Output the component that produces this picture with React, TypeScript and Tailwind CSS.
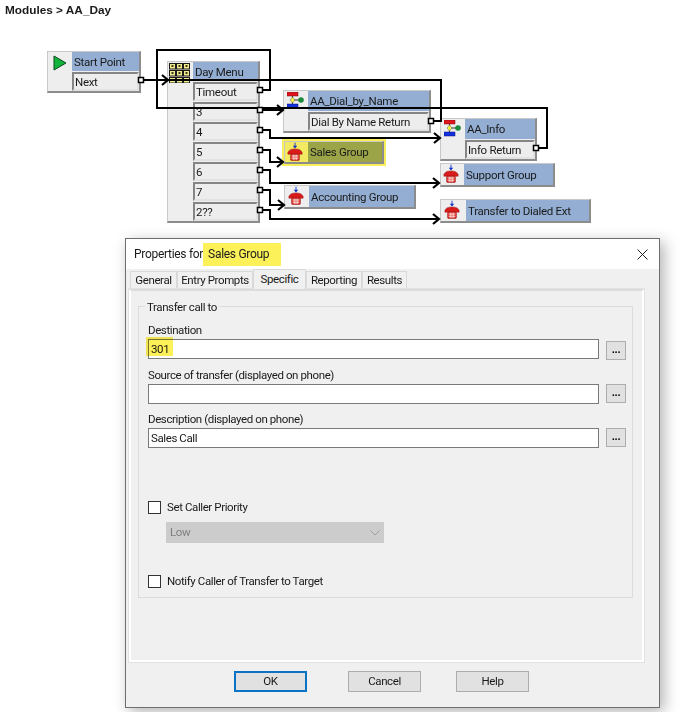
import { ReactNode } from "react";

const nodeFont = "font-['Roboto',sans-serif] text-[11.5px] tracking-[-0.3px] leading-none text-[#1a1a1a]";

function PlayIcon() {
  return (
    <svg width="14" height="16" viewBox="0 0 14 16" className="mt-[3px] ml-[5px]">
      <path d="M1 1 L13 8 L1 15 Z" fill="#12b33a" stroke="#0a4a1c" strokeWidth="1" />
    </svg>
  );
}

function MenuIcon() {
  const cells = [0, 1, 2, 3, 4, 5, 6, 7, 8];
  return (
    <svg width="21" height="20" viewBox="0 0 21 20" className="mt-px ml-px">
      {cells.map((c) => (
        <g key={c}>
          <rect x={0.5 + (c % 3) * 7} y={0.5 + Math.floor(c / 3) * 7} width="6" height="5.5" fill="#f2ec8c" stroke="#1a1a1a" />
          <rect x={2.5 + (c % 3) * 7} y={2 + Math.floor(c / 3) * 7} width="2" height="2" fill="#3a3a1a" />
        </g>
      ))}
    </svg>
  );
}

function ModuleIcon() {
  return (
    <svg width="20" height="18" viewBox="0 0 20 18" className="mt-px ml-[3px]">
      <rect x="0" y="0" width="11" height="4" fill="#e0141c" stroke="#7a1014" strokeWidth="0.5" />
      <rect x="0" y="12" width="11" height="4" fill="#1030e0" stroke="#101070" strokeWidth="0.5" />
      <path d="M5.5 4 V12 M5.5 8 H13" stroke="#333" strokeWidth="1" />
      <path d="M5.5 5 L8 8 L5.5 11 L3 8 Z" fill="#f4f03c" stroke="#555" strokeWidth="0.5" />
      <circle cx="14" cy="8" r="2.8" fill="#1c8a3c" />
    </svg>
  );
}

function PhoneIcon() {
  return (
    <svg width="16" height="20" viewBox="0 0 18 21">
      <path d="M9 0 V5" stroke="#1030c8" strokeWidth="1" />
      <path d="M6.5 3.5 L9 6.5 L11.5 3.5 Z" fill="#1030c8" />
      <path d="M1 11 C2 8 5 7 9 7 C13 7 16 8 17 11 L17 13 L1 13 Z" fill="#d81c1c" stroke="#8a1010" strokeWidth="0.5" />
      <rect x="4" y="13" width="10" height="7" rx="1" fill="#d81c1c" stroke="#8a1010" strokeWidth="0.5" />
      <path d="M5 15 H13 M5 17.5 H13 M7 13.5 V19.5 M9 13.5 V19.5 M11 13.5 V19.5" stroke="#fff2e8" strokeWidth="0.9" />
    </svg>
  );
}

function Cell({ label }: { label: string }) {
  return (
    <div className="flex h-[19px] items-center border-2 border-t-[#858585] border-l-[#858585] border-r-[#e2e2e2] border-b-[#e2e2e2] bg-[#ededed] pt-[2px] pl-px whitespace-nowrap">
      {label}
    </div>
  );
}

function Node({
  pos,
  icon,
  title,
  cells = [],
  iconCol,
  highlight = false,
}: {
  pos: string;
  icon: ReactNode;
  title: string;
  cells?: string[];
  iconCol: string;
  highlight?: boolean;
}) {
  return (
    <div
      className={`absolute flex border-t border-l border-t-[#c8c8c8] border-l-[#c8c8c8] border-r-2 border-b-2 border-r-[#8c8c8c] border-b-[#8c8c8c] ${nodeFont} ${pos} ${
        highlight ? "bg-[#f3ea63] outline-2 outline-[#f7ee5a]" : "bg-[#eeeeee]"
      }`}
    >
      <div className={`shrink-0 ${iconCol}`}>{icon}</div>
      <div className="flex min-w-0 flex-1 flex-col gap-[1px]">
        <div className={`flex flex-1 items-center pt-[2px] pl-[2px] whitespace-nowrap ${highlight ? "bg-[#9ba548]" : "bg-[#93aed2]"}`}>{title}</div>
        {cells.map((c) => (
          <Cell key={c} label={c} />
        ))}
      </div>
    </div>
  );
}

function Chevron({ x, y }: { x: number; y: number }) {
  return <path d={`M${x - 6} ${y - 5} L${x} ${y} L${x - 6} ${y + 5}`} fill="none" stroke="#000" strokeWidth="2.2" />;
}

const wires = [
  "M141 80 H441 V121 H431",
  "M260 90 H270 V50 H157 V108 H547 V148 H536",
  "M260 110 H283",
  "M260 130 H270 V138 H440",
  "M260 150 H270 V162 H283",
  "M260 170 H270 V183 H439",
  "M260 190 H270 V205 H284",
  "M260 210 H270 V219 H439",
];

const ports = [
  [141, 80], [260, 90], [260, 110], [260, 130], [260, 150], [260, 170], [260, 190], [260, 210], [431, 121], [536, 148],
];

const arrows = [
  [168, 80], [283, 110], [440, 138], [283, 162], [439, 183], [284, 205], [439, 219],
];

function Wires() {
  return (
    <svg width="683" height="235" className="absolute top-0 left-0">
      {wires.map((d) => (
        <path key={d} d={d} fill="none" stroke="#000" strokeWidth="2" />
      ))}
      {arrows.map(([x, y]) => (
        <Chevron key={`${x}-${y}`} x={x} y={y} />
      ))}
      {ports.map(([x, y]) => (
        <rect key={`${x}-${y}`} x={x - 2.5} y={y - 2.5} width="5" height="5" fill="#fff" stroke="#000" strokeWidth="1.5" />
      ))}
    </svg>
  );
}

function Field({ label, value, mark }: { label: string; value: string; mark?: boolean }) {
  return (
    <div className="flex flex-col">
      <div className="h-[16px] leading-[15px]">{label}</div>
      <div className="relative flex gap-[7px]">
        <div className="flex h-[20px] w-[451px] items-center border border-[#7a7a7a] bg-white pt-[2px] pl-[2px]">{value}</div>
        <button className={`flex h-[19px] w-[20px] items-center justify-center border border-[#adadad] bg-[#e1e1e1] pb-[2px] text-[11px] leading-none font-bold text-black ${mark ? "mt-[2px]" : ""}`}>
          ...
        </button>
        {mark && <div className="absolute top-[-2px] left-[-2px] h-[19px] w-[27px] bg-[#fdf15a] mix-blend-multiply" />}
      </div>
    </div>
  );
}

function Check({ label }: { label: string }) {
  return (
    <div className="flex h-[15px] items-center gap-[6px]">
      <div className="h-[13px] w-[13px] border border-[#333333] bg-white" />
      <span>{label}</span>
    </div>
  );
}

function Tab({ label, width, active = false }: { label: string; width: string; active?: boolean }) {
  return (
    <div
      className={`flex items-center justify-center border border-b-0 border-[#d9d9d9] bg-[#f0f0f0] whitespace-nowrap ${width} ${
        active ? "z-10 mb-[-1px] h-[20px]" : "mt-[2px] h-[18px]"
      }`}
    >
      {label}
    </div>
  );
}

function DlgButton({ label, primary = false }: { label: string; primary?: boolean }) {
  return (
    <button
      className={`h-[21px] w-[73px] bg-[#e1e1e1] ${primary ? "border-2 border-[#0b73c4]" : "border border-[#adadad]"}`}
    >
      {label}
    </button>
  );
}

function Dialog() {
  return (
    <div className="absolute top-[238px] left-[125px] flex h-[470px] w-[535px] flex-col border border-[#6e6e6e] bg-[#f0f0f0] font-['Roboto',sans-serif] text-[11.5px] tracking-[-0.4px] text-[#1a1a1a] shadow-[4px_4px_14px_rgba(0,0,0,0.3)]">
      <div className="flex h-[30px] shrink-0 items-center justify-between bg-white pr-[11px] pl-[8px] text-[12px] tracking-[-0.3px]">
        <div className="flex items-center">
          <span>Properties for</span>
          <span className="flex h-[23px] items-center bg-[#fdf15a] pr-[12px] pl-[5px]">Sales Group</span>
        </div>
        <svg width="11" height="11" viewBox="0 0 11 11">
          <path d="M0.5 0.5 L10.5 10.5 M10.5 0.5 L0.5 10.5" stroke="#222" strokeWidth="1" />
        </svg>
      </div>

      <div className="flex h-[20px] shrink-0 pl-[4px]">
        <Tab label="General" width="w-[47px]" />
        <Tab label="Entry Prompts" width="w-[76px]" />
        <Tab label="Specific" width="w-[53px]" active />
        <Tab label="Reporting" width="w-[56px]" />
        <Tab label="Results" width="w-[45px]" />
      </div>

      <div className="mr-[15px] ml-[3px] h-[373px] shrink-0 border-2 border-white border-t-[#dcdcdc] pt-[15px] pl-[7px] outline outline-[#e2e2e2]">
        <div className="relative h-[292px] w-[495px] border border-[#dcdcdc] pt-[16px] pl-[9px]">
          <span className="absolute top-[-8px] left-[6px] bg-[#f0f0f0] px-[2px] leading-[16px]">Transfer call to</span>
          <div className="flex flex-col gap-[8px]">
            <Field label="Destination" value="301" mark />
            <Field label="Source of transfer (displayed on phone)" value="" />
            <Field label="Description (displayed on phone)" value="Sales Call" />
          </div>
          <div className="mt-[52px]">
            <Check label="Set Caller Priority" />
          </div>
          <div className="mt-[7px] ml-[18px] flex h-[21px] w-[218px] items-center justify-between bg-[#cccccc] px-[4px] text-[#7f7f7f]">
            <span>Low</span>
            <svg width="10" height="6" viewBox="0 0 10 6">
              <path d="M0.5 0.5 L5 5 L9.5 0.5" fill="none" stroke="#a0a0a0" strokeWidth="1" />
            </svg>
          </div>
          <div className="mt-[31px]">
            <Check label="Notify Caller of Transfer to Target" />
          </div>
        </div>
      </div>

      <div className="flex pt-[9px] pl-[108px]">
        <DlgButton label="OK" primary />
        <div className="w-[41px]" />
        <DlgButton label="Cancel" />
        <div className="w-[35px]" />
        <DlgButton label="Help" />
      </div>
    </div>
  );
}

export default function App() {
  return (
    <div className="relative h-[712px] w-[683px] overflow-hidden bg-white">
      <div className="pt-[3px] pl-[5px] font-['Liberation_Sans',sans-serif] text-[11.8px] leading-[15px] font-bold text-[#1a1a1a]">
        Modules &gt; AA_Day
      </div>

      <Node pos="left-[47px] top-[51px] w-[94px] h-[42px]" iconCol="w-[24px]" icon={<PlayIcon />} title="Start Point" cells={["Next"]} />
      <Node
        pos="left-[167px] top-[61px] w-[93px] h-[162px]"
        iconCol="w-[25px]"
        icon={<MenuIcon />}
        title="Day Menu"
        cells={["Timeout", "3", "4", "5", "6", "7", "2??"]}
      />
      <Node pos="left-[283px] top-[90px] w-[148px] h-[43px]" iconCol="w-[24px]" icon={<ModuleIcon />} title="AA_Dial_by_Name" cells={["Dial By Name Return"]} />
      <Node pos="left-[284px] top-[141px] w-[100px] h-[23px]" iconCol="w-[23px] pl-[2px]" icon={<PhoneIcon />} title="Sales Group" highlight />
      <Node pos="left-[440px] top-[118px] w-[97px] h-[43px]" iconCol="w-[24px]" icon={<ModuleIcon />} title="AA_Info" cells={["Info Return"]} />
      <Node pos="left-[440px] top-[163px] w-[115px] h-[24px]" iconCol="w-[23px] pl-[2px]" icon={<PhoneIcon />} title="Support Group" />
      <Node pos="left-[284px] top-[185px] w-[132px] h-[24px]" iconCol="w-[24px] pl-[3px]" icon={<PhoneIcon />} title="Accounting Group" />
      <Node pos="left-[440px] top-[199px] w-[151px] h-[24px]" iconCol="w-[25px] pl-[3px]" icon={<PhoneIcon />} title="Transfer to Dialed Ext" />

      <Wires />
      <Dialog />
    </div>
  );
}
